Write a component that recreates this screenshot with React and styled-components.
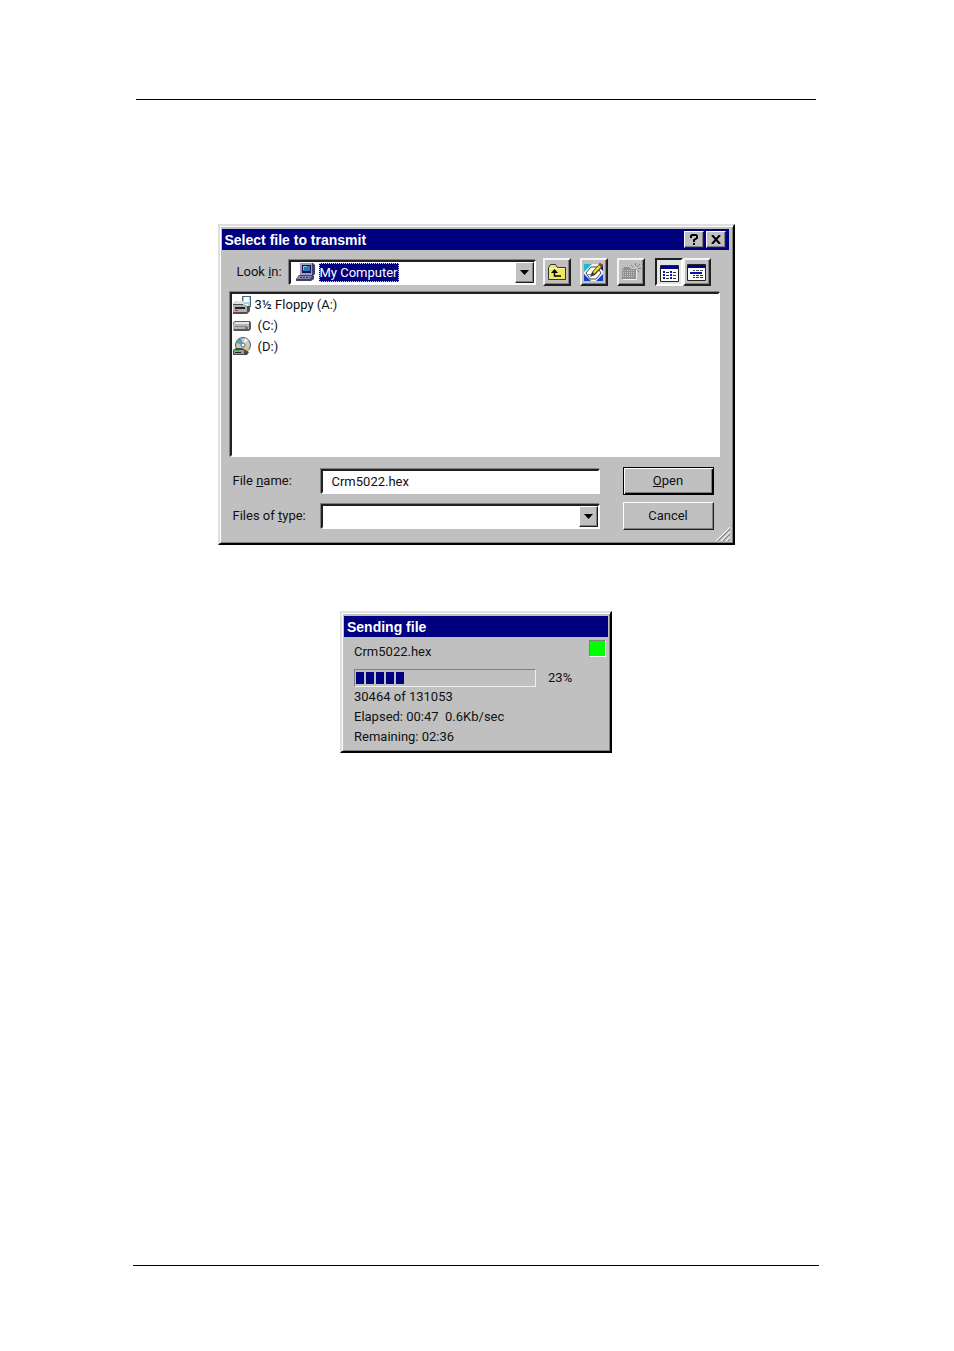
import styled, { createGlobalStyle, css } from 'styled-components'

const FACE = '#c0c0c0'
const SHADE = '#808080'
const DARK = '#202020'
const NAVY = '#000080'

const uiFont = css`
    font-family: Roboto, 'Liberation Sans', sans-serif;
    font-size: 13px;
    line-height: 20px;
    color: #111;
`

const raised = css`
    background: ${FACE};
    border: 1px solid;
    border-color: #fff ${DARK} ${DARK} #fff;
    box-shadow: inset -1px -1px ${SHADE};
`

const sunken = css`
    background: #fff;
    border: 2px solid;
    border-color: ${DARK} #fff #fff ${DARK};
    box-shadow: -1px -1px ${SHADE};
`

const GlobalStyle = createGlobalStyle`
    *, *::before, *::after {
        box-sizing: border-box;
    }
    body {
        margin: 0;
        background: #fff;
    }
`

const Page = styled.main`
    ${uiFont};
    display: flex;
    flex-direction: column;
    align-items: center;
    min-height: 100vh;
    padding: 99px 135px 85px 133px;
`

const Rule = styled.hr`
    width: 100%;
    height: 1px;
    margin: 0;
    border: 0;
    background: #000;
`

const HeaderRule = styled(Rule)`
    width: calc(100% - 6px);
`

const FooterRule = styled(Rule)`
    margin-top: auto;
`

const Window = styled.section`
    width: 100%;
    max-width: ${({ $maxWidth }) => $maxWidth}px;
    margin-top: ${({ $gap }) => $gap}px;
    padding: 3px 2px 2px;
    background: ${FACE};
    border: 2px solid;
    border-color: #dfdfdf #000 #000 #dfdfdf;
    box-shadow: inset 1px 1px #fff, inset -1px -1px ${SHADE};
`

const DialogWindow = styled(Window)`
    position: relative;
    padding-right: 4px;
`

const TitleBar = styled.header`
    display: flex;
    align-items: center;
    gap: 2px;
    height: 21px;
    padding: 0 3px;
    background: ${NAVY};
`

const Title = styled.h1`
    flex: 1;
    margin: 0;
    font: bold 14px/20px 'Liberation Sans', sans-serif;
    color: #fff;
`

const TitleButton = styled.button`
    ${raised};
    display: grid;
    place-items: center;
    width: 20px;
    height: 17px;
    padding: 0;
`

const DialogBody = styled.div`
    padding: 8px 9px 11px 8px;
`

const Toolbar = styled.div`
    display: flex;
    align-items: center;
    padding: 0 9px 0 7px;
`

const LookLabel = styled.label`
    width: 52px;
    white-space: nowrap;
`

const Combo = styled.div`
    ${sunken};
    display: flex;
    align-items: center;
    width: 100%;
    height: 25px;
`

const LookCombo = styled(Combo)`
    flex: 1;
    padding-left: 4px;
    gap: 3px;
`

const PlaceSelect = styled.select`
    ${uiFont};
    appearance: none;
    field-sizing: content;
    height: 19px;
    line-height: 17px;
    margin-right: auto;
    padding: 0;
    border: 1px dotted #e8e080;
    border-radius: 0;
    background: ${NAVY};
    color: #fff;
    outline: 0;
`

const TypeSelect = styled.select`
    ${uiFont};
    appearance: none;
    flex: 1;
    min-width: 0;
    height: 20px;
    padding: 0 9px;
    border: 0;
    background: #fff;
    outline: 0;
`

const DropButton = styled.button`
    ${raised};
    display: grid;
    place-items: center;
    width: 19px;
    height: 21px;
    padding: 0;
`

const ToolButtons = styled.div`
    display: flex;
    gap: 9px;
    margin: 0 10px 0 7px;
`

const ViewButtons = styled.div`
    display: flex;
`

const ToolButton = styled.button`
    ${raised};
    display: grid;
    place-items: center;
    width: 28px;
    height: 28px;
    padding: 0;
    border-width: 2px;
    border-color: #f4f4f4 ${DARK} ${DARK} #f4f4f4;
    ${({ $pressed }) =>
        $pressed &&
        css`
            padding: 2px 0 0 2px;
            background: #e4e4e4;
            border-color: ${DARK} #fff #fff ${DARK};
            box-shadow: none;
        `};
`

const FileList = styled.ul`
    ${sunken};
    height: 165px;
    margin: 6px 0 10px;
    padding: 0;
    list-style: none;
`

const FileItem = styled.li`
    display: flex;
    align-items: center;
    gap: ${({ $gap }) => $gap}px;
    height: 21px;
`

const Form = styled.form`
    display: grid;
    grid-template-columns: 88px 1fr 91px;
    row-gap: 7px;
    align-items: center;
    padding: 0 6px 0 3px;
`

const FieldCell = styled.div`
    padding-right: 23px;
`

const NameInput = styled.input`
    ${uiFont};
    ${sunken};
    display: block;
    width: 100%;
    height: 25px;
    padding: 0 9px;
    border-radius: 0;
    outline: 0;
`

const PushButton = styled.button`
    ${uiFont};
    ${raised};
    height: 28px;
    padding: 0;
    ${({ $default }) =>
        $default &&
        css`
            border: 1px solid #000;
            box-shadow: inset 1px 1px #fff, inset -1px -1px #000,
                inset -2px -2px ${SHADE};
        `};
`

const Grip = styled.svg`
    position: absolute;
    right: 3px;
    bottom: 2px;
`

const TransferBody = styled.div`
    display: flex;
    align-items: flex-start;
    justify-content: space-between;
    padding: 3px 2px 2px 10px;
`

const Stats = styled.div`
    padding-top: 2px;
`

const Line = styled.p`
    margin: 0;
    white-space: pre;
`

const ProgressRow = styled.div`
    display: flex;
    align-items: center;
    gap: 12px;
    height: 25px;
    padding-top: 6px;
`

const ProgressTrack = styled.div`
    display: flex;
    gap: 2px;
    width: 182px;
    height: 18px;
    padding: 2px 1px;
    border: 1px solid;
    border-color: ${SHADE} #f0f0f0 #f0f0f0 ${SHADE};
`

const ProgressBlock = styled.span`
    width: 8px;
    background: ${NAVY};
`

const Lamp = styled.span`
    width: 17px;
    height: 17px;
    background: #0f0;
    border: 1px solid;
    border-color: ${SHADE} #fff #fff ${SHADE};
`

const Arrow = () => (
    <svg width="9" height="5" viewBox="0 0 9 5">
        <path d="M0 0h9L4.5 5z" fill="#000" />
    </svg>
)

const ComputerIcon = () => (
    <svg width="21" height="20" viewBox="0 0 21 20">
        <path d="M6 1h12l2 2v9l-2 2H5z" fill="#40406c" />
        <path d="M5 1h12v12H5z" fill="#9c9cbc" />
        <path d="M7 3h9v8H7z" fill="#141464" />
        <path d="M8 4h7v5H8z" fill="#2c78b4" />
        <path d="M8 4h4v1H9v3H8z" fill="#78c0e0" />
        <path d="M4 13h13l2 1v3l-3 2H1v-2z" fill="#404068" />
        <path d="M4 14h13l-2 3H1z" fill="#8888a8" />
        <path d="M5 15.500h10M3 17.500h11" stroke="#34345c" strokeDasharray="2 1" />
    </svg>
)

const FloppyIcon = () => (
    <svg width="20" height="18" viewBox="0 0 20 18">
        <path d="M10 0h9v11h-9z" fill="#48687c" />
        <path d="M11 1h7v9h-7z" fill="#a8d4e4" />
        <path d="M12 1h5v5h-5z" fill="#fff" />
        <path d="M13 8h3v3h-3z" fill="#fff" />
        <path d="M1 8l3-3h7v5h7v5l-3 3H1z" fill="#505050" />
        <path d="M1 8l3-3h7l1 3z" fill="#e0e0e0" />
        <path d="M1 9h14v7H1z" fill="#b0b0b0" />
        <path d="M3 11h10v2H3z" fill="#222" />
        <path d="M3 14h3v1H3z" fill="#b03030" />
    </svg>
)

const DriveIcon = () => (
    <svg width="20" height="12" viewBox="0 0 20 12">
        <path d="M1 3l2-2h15l1 2v6l-2 2H2L1 9z" fill="#585858" />
        <path d="M2 3l2-1h13v2H2z" fill="#e8e8e8" />
        <path d="M1 4h16v5H1z" fill="#b4b4b4" />
        <path d="M3 6h12v1H3z" fill="#888" />
        <path d="M13 7h3v2h-3z" fill="#30a030" />
    </svg>
)

const DiscIcon = () => (
    <svg width="20" height="19" viewBox="0 0 20 19">
        <circle cx="11" cy="8" r="7.5" fill="#c8c8c8" stroke="#555" />
        <path d="M11 8L5 3l4-2z" fill="#3f9fc0" />
        <path d="M11 8l-7-2 1-3z" fill="#58b070" />
        <path d="M11 8l6 5-3 2z" fill="#d8c850" />
        <path d="M11 8l2-7 3 2z" fill="#eef" />
        <circle cx="11" cy="8" r="2" fill="#fff" stroke="#666" />
        <path d="M1 13l3-2h6l7 4-2 3H1z" fill="#484848" />
        <path d="M2 13h10v4H2z" fill="#999" />
        <path d="M3 15h6v1H3z" fill="#222" />
        <path d="M4 13h3v1H4z" fill="#40b040" />
    </svg>
)

const UpFolderIcon = () => (
    <svg width="18" height="16" viewBox="0 0 18 16">
        <path
            d="M.5 3.500l2-3h5l2 3h8v12H.5z"
            fill="#f0e860"
            stroke="#333"
        />
        <path d="M2 4.500h14" stroke="#fffcb0" />
        <path d="M6.500 5l3.500 4H3z" fill="#000" />
        <path d="M6.500 8v4H13" fill="none" stroke="#000" strokeWidth="1.500" />
    </svg>
)

const DesktopIcon = () => (
    <svg width="20" height="19" viewBox="0 0 20 19">
        <path d="M0 1h19v17H0z" fill="#f4f4f4" />
        <path d="M0 1h8L0 9z" fill="#20b8d0" />
        <path d="M0 18v-7l7 7zM19 18h-7l7-7z" fill="#1040d0" />
        <path d="M19 1v7l-4-4z" fill="#102080" />
        <path
            d="M7 4h6l4 6-5 6H6L2 10z"
            fill="#fff"
            stroke="#445"
        />
        <path d="M6 14l2-5 8-9 3 3-8 9z" fill="#333" />
        <path d="M9 9l6-7 2 2-7 7z" fill="#f0dc20" />
        <path d="M15 1l1-1 3 2-1 2z" fill="#c83020" />
        <path d="M4 11.500h3" stroke="#888" />
    </svg>
)

const NewFolderIcon = () => (
    <svg width="20" height="18" viewBox="0 0 20 18">
        <path d="M1 7l2-3h5l2 2h5v10H1z" fill="#909090" />
        <path
            d="M2 7.500h12M2 9.500h12M2 11.500h12M2 13.500h12"
            stroke="#c8c8c8"
            strokeDasharray="1 1"
        />
        <path d="M2 16.500h13.500V7" fill="none" stroke="#eee" />
        <path
            d="M14.500 0v3M10 2l2 2M19 1l-3 3M17 5.500h3M16 7l2 2"
            stroke="#808080"
        />
    </svg>
)

const ListViewIcon = () => (
    <svg width="19" height="17" viewBox="0 0 19 17">
        <path d="M.5.500h18v16H.5z" fill="#fff" stroke="#222" />
        <path d="M1 1h17v3H1z" fill={NAVY} />
        <path
            d="M3 6h2v2H3zM3 9h2v2H3zM3 12h2v2H3zM10 6h2v2h-2zM10 9h2v2h-2zM10 12h2v2h-2z"
            fill="#1010b0"
        />
        <path
            d="M6 7.500h3M6 10.500h3M6 13.500h3M13 7.500h3M13 10.500h3M13 13.500h3"
            stroke="#333"
        />
    </svg>
)

const DetailViewIcon = () => (
    <svg width="19" height="17" viewBox="0 0 19 17">
        <path d="M.5.500h18v16H.5z" fill="#fff" stroke="#222" />
        <path d="M1 1h17v3H1z" fill={NAVY} />
        <path d="M6 6.500h2M9 6.500h3M13 6.500h3" stroke="#555" />
        <path d="M3 9h12" stroke="#1010b0" strokeWidth="2" />
        <path
            d="M6 11.500h2M9 11.500h3M13 11.500h3M6 13.500h2M9 13.500h3M13 13.500h3"
            stroke="#333"
        />
    </svg>
)

const places = [
    { name: '3½ Floppy (A:)', Icon: FloppyIcon, gap: 3 },
    { name: '(C:)', Icon: DriveIcon, gap: 6 },
    { name: '(D:)', Icon: DiscIcon, gap: 6 },
]

function SelectFileDialog() {
    return (
        <DialogWindow $maxWidth={517} $gap={124}>
            <TitleBar>
                <Title>Select file to transmit</Title>
                <TitleButton aria-label="Help">
                    <svg width="10" height="11" viewBox="0 0 10 11">
                        <path
                            d="M2 4V2l1-1h4l1 1v2L5 6v2M5 9v2"
                            fill="none"
                            stroke="#000"
                            strokeWidth="2"
                        />
                    </svg>
                </TitleButton>
                <TitleButton aria-label="Close">
                    <svg width="10" height="9" viewBox="0 0 10 9">
                        <path
                            d="M1 0l8 9M9 0L1 9"
                            stroke="#000"
                            strokeWidth="2"
                        />
                    </svg>
                </TitleButton>
            </TitleBar>
            <DialogBody>
                <Toolbar>
                    <LookLabel htmlFor="look-in">
                        Look <u>i</u>n:
                    </LookLabel>
                    <LookCombo>
                        <ComputerIcon />
                        <PlaceSelect id="look-in">
                            <option>My Computer</option>
                        </PlaceSelect>
                        <DropButton aria-label="Show places">
                            <Arrow />
                        </DropButton>
                    </LookCombo>
                    <ToolButtons>
                        <ToolButton aria-label="Up one level">
                            <UpFolderIcon />
                        </ToolButton>
                        <ToolButton aria-label="View desktop">
                            <DesktopIcon />
                        </ToolButton>
                        <ToolButton aria-label="Create new folder" disabled>
                            <NewFolderIcon />
                        </ToolButton>
                    </ToolButtons>
                    <ViewButtons>
                        <ToolButton aria-label="List" aria-pressed $pressed>
                            <ListViewIcon />
                        </ToolButton>
                        <ToolButton aria-label="Details">
                            <DetailViewIcon />
                        </ToolButton>
                    </ViewButtons>
                </Toolbar>
                <FileList>
                    {places.map(({ name, Icon, gap }) => (
                        <FileItem key={name} $gap={gap}>
                            <Icon />
                            {name}
                        </FileItem>
                    ))}
                </FileList>
                <Form onSubmit={(e) => e.preventDefault()}>
                    <label htmlFor="file-name">
                        File <u>n</u>ame:
                    </label>
                    <FieldCell>
                        <NameInput id="file-name" defaultValue="Crm5022.hex" />
                    </FieldCell>
                    <PushButton type="submit" $default>
                        <u>O</u>pen
                    </PushButton>
                    <label htmlFor="file-type">
                        Files of <u>t</u>ype:
                    </label>
                    <FieldCell>
                        <Combo>
                            <TypeSelect id="file-type">
                                <option aria-label="Any type" />
                            </TypeSelect>
                            <DropButton type="button" aria-label="Show types">
                                <Arrow />
                            </DropButton>
                        </Combo>
                    </FieldCell>
                    <PushButton type="button">Cancel</PushButton>
                </Form>
            </DialogBody>
            <Grip width="14" height="14" viewBox="0 0 14 14">
                <path d="M0 14L14 0M5 14l9-9M10 14l4-4" stroke="#fff" />
                <path d="M2 14L14 2M7 14l7-7M12 14l2-2" stroke={SHADE} />
            </Grip>
        </DialogWindow>
    )
}

function SendingWindow({ sent, total }) {
    const percent = Math.round((sent / total) * 100)
    const blocks = Math.ceil(percent / 5)
    return (
        <Window $maxWidth={272} $gap={66}>
            <TitleBar>
                <Title as="h2">Sending file</Title>
            </TitleBar>
            <TransferBody>
                <Stats>
                    <Line>Crm5022.hex</Line>
                    <ProgressRow>
                        <ProgressTrack
                            role="progressbar"
                            aria-label="Sending file"
                            aria-valuenow={percent}
                        >
                            {Array.from({ length: blocks }, (_, i) => (
                                <ProgressBlock key={i} />
                            ))}
                        </ProgressTrack>
                        {percent}%
                    </ProgressRow>
                    <Line>
                        {sent} of {total}
                    </Line>
                    <Line>{'Elapsed: 00:47  0.6Kb/sec'}</Line>
                    <Line>Remaining: 02:36</Line>
                </Stats>
                <Lamp />
            </TransferBody>
        </Window>
    )
}

export default function App() {
    return (
        <>
            <GlobalStyle />
            <Page>
                <HeaderRule />
                <SelectFileDialog />
                <SendingWindow sent={30464} total={131053} />
                <FooterRule />
            </Page>
        </>
    )
}
